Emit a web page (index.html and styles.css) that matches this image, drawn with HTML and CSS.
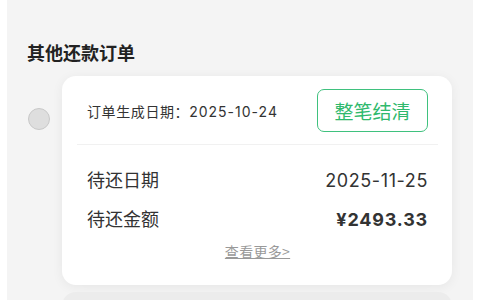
FILE: index.html
```html
<!DOCTYPE html>
<html lang="zh">
<head>
<meta charset="utf-8">
<link rel="stylesheet" href="styles.css">
</head>
<body>
<div class="page">
  <h2 class="title">其他还款订单</h2>
  <div class="order">
    <span class="radio"></span>
    <div class="card">
      <div class="card-head">
        <span class="created">订单生成日期：<span class="num">2025-10-24</span></span>
        <button class="settle">整笔结清</button>
      </div>
      <div class="card-body">
        <div class="row"><span class="label">待还日期</span><span class="num">2025-11-25</span></div>
        <div class="row"><span class="label">待还金额</span><span class="num amount">¥2493.33</span></div>
        <a class="more">查看更多&gt;</a>
      </div>
    </div>
  </div>
  <div class="order">
    <span class="radio hidden"></span>
    <div class="card next"></div>
  </div>
</div>
</body>
</html>
```
FILE: styles.css
```css
* { box-sizing: border-box; }
html, body { margin: 0; padding: 0; background: #ffffff; height: 300px; overflow: hidden; }
body { font-family: "Noto Sans CJK SC", "Noto Sans", sans-serif; color: #333; }
.page {
  margin: 0 7px;
  height: 300px;
  background: #f4f4f4;
  padding: 40px 0 0 20px;
  overflow: hidden;
}
.title {
  margin: 0 0 12px 0;
  font-size: 18px;
  line-height: 24px;
  font-weight: 700;
  color: #222;
}
.order {
  display: flex;
  align-items: flex-start;
  gap: 12px;
  padding-left: 1px;
  margin-bottom: 7px;
}
.radio {
  flex: none;
  width: 22px;
  height: 22px;
  border-radius: 50%;
  background: #dedede;
  border: 1px solid #c8c8c8;
  margin-top: 32px;
}
.radio.hidden { visibility: hidden; }
.card {
  width: 390px;
  background: #fff;
  border-radius: 14px;
  box-shadow: 0 2px 12px rgba(0,0,0,0.06);
}
.card.next { height: 60px; background: #ececec; box-shadow: none; }
.card-head {
  display: flex;
  justify-content: space-between;
  align-items: center;
  padding: 13px 10px 12px 10px;
  margin: 0 14px 0 15px;
  border-bottom: 1px solid #f1f1f1;
}
.num { font-family: Inter, "Liberation Sans", "Noto Sans CJK SC", sans-serif; }
.created { font-size: 14px; color: #333; letter-spacing: 0.6px; }
.created .num { letter-spacing: 1px; }
.settle {
  width: 111px;
  height: 43px;
  border: 1.5px solid #3fc17e;
  border-radius: 7px;
  background: #fff;
  color: #2fb96d;
  font-family: inherit;
  font-size: 19px;
  padding: 0;
}
.card-body {
  padding: 22px 24px 0 25px;
  height: 140px;
}
.row {
  display: flex;
  justify-content: space-between;
  align-items: baseline;
  font-size: 18px;
  line-height: 24px;
  margin-bottom: 13px;
  color: #333;
}
.row .num { letter-spacing: 0.6px; }
.row .amount { letter-spacing: 0.8px; }
.amount { font-weight: 700; }
.more {
  display: block;
  text-align: center;
  font-size: 14px;
  line-height: 16px;
  color: #999;
  letter-spacing: 0.3px;
  text-decoration: underline;
  margin-top: -2px;
}
```
